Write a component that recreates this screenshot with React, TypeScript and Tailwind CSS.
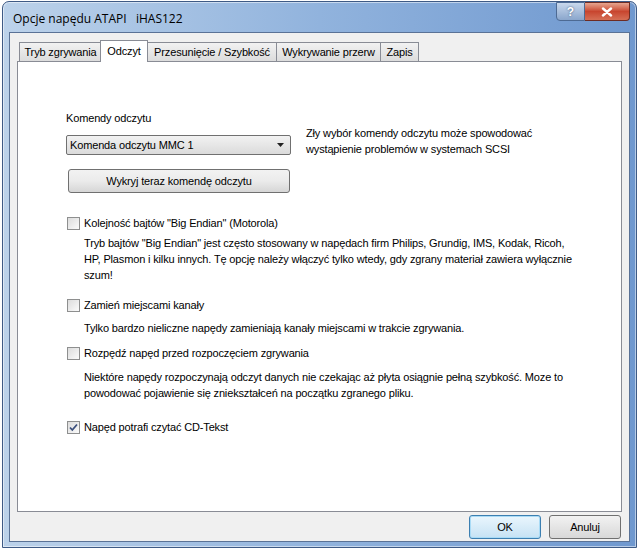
import React from 'react';

const ui = { fontFamily: '"Liberation Sans", Arial, sans-serif' };

function Checkbox({ checked = false }: { checked?: boolean }) {
  return (
    <span className="flex h-[13px] w-[13px] shrink-0 items-center justify-center border border-[#8e8f8f] bg-gradient-to-br from-[#dcdcdc] to-[#fbfbfb]">
      {checked ? (
        <svg width="11" height="11" viewBox="0 0 11 11">
          <path d="M2 5.5 L4.3 8 L9 2.5" fill="none" stroke="#3b4f7d" strokeWidth="1.8" />
        </svg>
      ) : null}
    </span>
  );
}

function Option({
  label,
  checked,
  descClass,
  className,
  children,
}: {
  label: string;
  checked?: boolean;
  descClass?: string;
  className?: string;
  children?: React.ReactNode;
}) {
  return (
    <div className={className}>
      <label className="flex h-[16px] items-center gap-[4px]">
        <Checkbox checked={checked} />
        <span>{label}</span>
      </label>
      {children ? <p className={'whitespace-nowrap pl-[17px] leading-[16px] ' + (descClass ?? '')}>{children}</p> : null}
    </div>
  );
}

const tabs = [
  { label: 'Tryb zgrywania', w: 'w-[82px]' },
  { label: 'Odczyt', w: 'w-[48px]' },
  { label: 'Przesunięcie / Szybkość', w: 'w-[129px]' },
  { label: 'Wykrywanie przerw', w: 'w-[104px]' },
  { label: 'Zapis', w: 'w-[39px]' },
];

export default function App() {
  return (
    <div className="h-[551px] w-[641px] overflow-hidden bg-white" style={ui}>
      <div className="ml-[2px] mt-[1px] h-[547px] w-[635px] rounded-t-[7px] border border-[#3e5a85] bg-gradient-to-r from-[#bcd2ea] via-[#91b3dd] to-[#6f98cf] p-[6px] pt-0 shadow-[inset_0_0_0_1px_rgba(255,255,255,0.5)]">
        <div className="flex h-[30px] items-start justify-between">
          <span className="mt-[8px] pl-[4px] text-[12px] text-black" style={{ fontFamily: '"Open Sans", "Liberation Sans", sans-serif' }}>
            Opcje napędu ATAPI&nbsp;&nbsp; iHAS122
          </span>
          <div className="flex">
            <span className="flex h-[19px] w-[29px] items-center justify-center rounded-bl-[4px] border border-[#4d6a93] bg-gradient-to-b from-[#c9d8ec] to-[#8aa6cc] text-[12px] font-bold text-white [text-shadow:0_0_2px_#3a4f6e]">
              ?
            </span>
            <span className="flex h-[19px] w-[45px] items-center justify-center rounded-br-[4px] border border-l-0 border-[#6e2b22] bg-gradient-to-b from-[#e6a590] via-[#c8452f] to-[#d56e55]">
              <svg width="12" height="10" viewBox="0 0 12 10">
                <path d="M2 1.5 L10 8.5 M10 1.5 L2 8.5" stroke="#fff" strokeWidth="2.4" strokeLinecap="round" />
              </svg>
            </span>
          </div>
        </div>
        <div className="h-[510px] border border-[#5a7296] bg-[#f0f0f0] px-[7px] text-[11px] tracking-[-0.15px] text-black">
          <div className="flex h-[28px] items-end pl-[2px]">
            {tabs.map((t) => {
              const sel = t.label === 'Odczyt';
              return (
                <span
                  key={t.label}
                  className={
                    (sel
                      ? 'relative z-10 -mb-[1px] -mx-[1px] h-[22px] border-b-0 bg-white'
                      : 'h-[19px] border-b-0 border-r-0 bg-gradient-to-b from-[#f2f2f2] to-[#dcdcdc] last:border-r') +
                    ' flex shrink-0 items-center justify-center border border-[#898c95] ' +
                    t.w
                  }
                >
                  {t.label}
                </span>
              );
            })}
          </div>
          <div className="h-[451px] border border-[#898c95] bg-white pl-[48px] pt-[48px]">
            <div className="flex">
              <div className="w-[225px]">
                <div className="leading-[16px]">Komendy odczytu</div>
                <div className="mt-[9px] flex h-[20px] items-center justify-between rounded-[2px] border border-[#707070] bg-gradient-to-b from-[#f2f2f2] to-[#dbdbdb] pl-[3px] pr-[6px]">
                  <span>Komenda odczytu MMC 1</span>
                  <svg width="7" height="4" viewBox="0 0 7 4">
                    <path d="M0 0 H7 L3.5 4 Z" fill="#222" />
                  </svg>
                </div>
                <div className="ml-[2px] mt-[14px] flex h-[24px] w-[222px] items-center justify-center rounded-[3px] border border-[#707070] bg-gradient-to-b from-[#f2f2f2] via-[#ebebeb] to-[#d6d6d6]">
                  Wykryj teraz komendę odczytu
                </div>
              </div>
              <p className="ml-[15px] mt-[15px] leading-[16px]">
                Zły wybór komendy odczytu może spowodować
                <br />
                wystąpienie problemów w systemach SCSI
              </p>
            </div>
            <div className="flex flex-col pl-[1px]">
              <Option className="mt-[22px]" descClass="mt-[4px]" label={'Kolejność bajtów "Big Endian" (Motorola)'}>
                Tryb bajtów "Big Endian" jest często stosowany w napędach firm Philips, Grundig, IMS, Kodak, Ricoh,
                <br />
                HP, Plasmon i kilku innych. Tę opcję należy włączyć tylko wtedy, gdy zgrany materiał zawiera wyłącznie
                <br />
                szum!
              </Option>
              <Option className="mt-[14px]" descClass="mt-[7px]" label="Zamień miejscami kanały">
                Tylko bardzo nieliczne napędy zamieniają kanały miejscami w trakcie zgrywania.
              </Option>
              <Option className="mt-[9px]" descClass="mt-[8px]" label="Rozpędź napęd przed rozpoczęciem zgrywania">
                Niektóre napędy rozpoczynają odczyt danych nie czekając aż płyta osiągnie pełną szybkość. Moze to
                <br />
                powodować pojawienie się zniekształceń na początku zgranego pliku.
              </Option>
              <Option className="mt-[18px]" label="Napęd potrafi czytać CD-Tekst" checked />
            </div>
          </div>
          <div className="mt-[3px] flex justify-end gap-[8px] pr-[1px]">
            <button className="h-[24px] w-[72px] rounded-[3px] border border-[#3c7fb1] bg-gradient-to-b from-[#eaf6fd] to-[#c6e2f4] shadow-[inset_0_0_0_1px_#a9dbf6]">
              OK
            </button>
            <button className="h-[24px] w-[72px] rounded-[3px] border border-[#707070] bg-gradient-to-b from-[#f2f2f2] to-[#d8d8d8]">
              Anuluj
            </button>
          </div>
        </div>
      </div>
    </div>
  );
}
